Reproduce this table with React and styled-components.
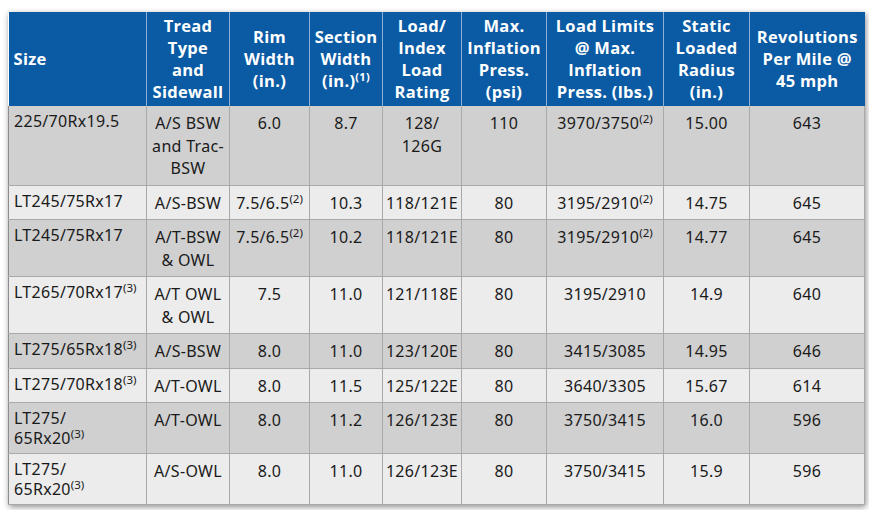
import React from "react";
import styled, { createGlobalStyle } from "styled-components";

const Global = createGlobalStyle`
  body {
    margin: 0;
    background: #ffffff;
  }
`;

const Page = styled.div`
  padding: 12px 5px 5px 8px;
`;

const Table = styled.table`
  width: 856px;
  table-layout: fixed;
  border-collapse: collapse;
  box-shadow: 1px 2px 6px rgba(0, 0, 0, 0.45);
  font-family: "Noto Sans", "Open Sans", sans-serif;
  color: #1a1a1a;
`;

const Head = styled.th`
  background: #0b5ba4;
  color: #ffffff;
  font-family: "Open Sans", "Noto Sans", sans-serif;
  font-weight: 700;
  font-size: 16.5px;
  letter-spacing: 0.3px;
  line-height: 22px;
  height: 94px;
  padding: 0 2px;
  text-align: ${(p) => (p.$left ? "left" : "center")};
  vertical-align: middle;
  border-left: 1px solid #8db1d6;
  box-sizing: border-box;

  &:first-child {
    border-left: none;
    padding-left: 5px;
  }

  sup {
    font-size: 11px;
    line-height: 0;
  }
`;

const Row = styled.tr`
  background: ${(p) => (p.$shade ? "#d0d0d0" : "#ececec")};
`;

const Cell = styled.td`
  font-size: 16px;
  letter-spacing: 0.3px;
  line-height: ${(p) => (p.$left ? "20px" : "22.5px")};
  padding: ${(p) => (p.$left ? "5px 2px 5px 5px" : "6px 1px 5px")};
  text-align: ${(p) => (p.$left ? "left" : "center")};
  vertical-align: top;
  border: 1px solid #a9a9a9;
  border-top: none;
  white-space: nowrap;

  &:first-child {
    border-left: 1px solid #8c8c8c;
  }

  sup {
    font-size: 11.5px;
    letter-spacing: 0;
    line-height: 0;
  }
`;

const widths = [138, 83, 80, 73, 79, 85, 117, 86, 115];

const heads = [
  ["Size"],
  ["Tread", "Type", "and", "Sidewall"],
  ["Rim", "Width", "(in.)"],
  ["Section", "Width", <>(in.)<sup>(1)</sup></>],
  ["Load/", "Index", "Load", "Rating"],
  ["Max.", "Inflation", "Press.", "(psi)"],
  ["Load Limits", "@ Max.", "Inflation", "Press. (lbs.)"],
  ["Static", "Loaded", "Radius", "(in.)"],
  ["Revolutions", "Per Mile @", "45 mph"],
];

const n2 = <sup>(2)</sup>;
const n3 = <sup>(3)</sup>;

const rows = [
  [["225/70Rx19.5"], ["A/S BSW", "and Trac-", "BSW"], "6.0", "8.7", ["128/", "126G"], "110", <>3970/3750{n2}</>, "15.00", "643"],
  [["LT245/75Rx17"], "A/S-BSW", <>7.5/6.5{n2}</>, "10.3", "118/121E", "80", <>3195/2910{n2}</>, "14.75", "645"],
  [["LT245/75Rx17"], ["A/T-BSW", "& OWL"], <>7.5/6.5{n2}</>, "10.2", "118/121E", "80", <>3195/2910{n2}</>, "14.77", "645"],
  [[<>LT265/70Rx17{n3}</>], ["A/T OWL", "& OWL"], "7.5", "11.0", "121/118E", "80", "3195/2910", "14.9", "640"],
  [[<>LT275/65Rx18{n3}</>], "A/S-BSW", "8.0", "11.0", "123/120E", "80", "3415/3085", "14.95", "646"],
  [[<>LT275/70Rx18{n3}</>], "A/T-OWL", "8.0", "11.5", "125/122E", "80", "3640/3305", "15.67", "614"],
  [["LT275/", <>65Rx20{n3}</>], "A/T-OWL", "8.0", "11.2", "126/123E", "80", "3750/3415", "16.0", "596"],
  [["LT275/", <>65Rx20{n3}</>], "A/S-OWL", "8.0", "11.0", "126/123E", "80", "3750/3415", "15.9", "596"],
];

const Lines = ({ value }) =>
  Array.isArray(value)
    ? value.map((line, i) => (
        <React.Fragment key={i}>
          {i > 0 && <br />}
          {line}
        </React.Fragment>
      ))
    : value;

export default function App() {
  return (
    <Page>
      <Global />
      <Table>
        <colgroup>
          {widths.map((w, i) => (
            <col key={i} style={{ width: w }} />
          ))}
        </colgroup>
        <thead>
          <tr>
            {heads.map((h, i) => (
              <Head key={i} $left={i === 0}>
                <Lines value={h} />
              </Head>
            ))}
          </tr>
        </thead>
        <tbody>
          {rows.map((r, i) => (
            <Row key={i} $shade={i % 2 === 0}>
              {r.map((c, j) => (
                <Cell key={j} $left={j === 0}>
                  <Lines value={c} />
                </Cell>
              ))}
            </Row>
          ))}
        </tbody>
      </Table>
    </Page>
  );
}
